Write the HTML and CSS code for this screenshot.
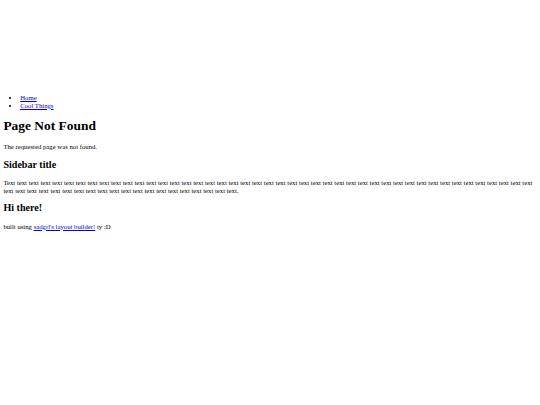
FILE: index.html
```html
<!DOCTYPE html>
<html lang="en">

<head>
    <meta charset="UTF-8">
    <meta name="viewport" content="width=device-width, initial-scale=1.0">
    <title>Page Not Found</title>
    <link rel="stylesheet" href="styles.css">
</head>

<body>
    <header class="banner"></header>

    <nav>
        <ul class="nav-list">
            <li><a href="#">Home</a></li>
            <li><a href="#">Cool Things</a></li>
        </ul>
    </nav>

    <main>
        <h1>Page Not Found</h1>
        <p>The requested page was not found.</p>
    </main>

    <aside>
        <h2>Sidebar title</h2>
        <p>Text text text text text text text text text text text text text text text text text text text text text text text text text text text text text text text text text text text text text text text text text text text text text text text text text text text text text text text text text text text text text text text text text.</p>
    </aside>

    <footer>
        <h2>Hi there!</h2>
        <p>built using <a href="#">sadgrl's layout builder!</a> ty :D</p>
    </footer>
</body>

</html>
```

FILE: styles.css
```css
/* Tudo escalado a partir de 6.72px */
body {
    margin: 3.4px;
    font-family: "Liberation Serif", "Times New Roman", serif;
    font-size: 6.72px;
    line-height: 7.4px;
    color: #000;
    background: #fff;
}

.banner {
    height: 84px;
}

.nav-list {
    margin: 6.72px 0;
    padding-left: 16.8px;
}

a {
    color: #0000ee;
}

h1 {
    font-size: 13.44px;
    line-height: 16px;
    margin: 9px 0;
}

h2 {
    font-size: 10.08px;
    line-height: 12px;
    margin: 8.4px 0;
}

p {
    margin: 6.72px 0;
}
```
